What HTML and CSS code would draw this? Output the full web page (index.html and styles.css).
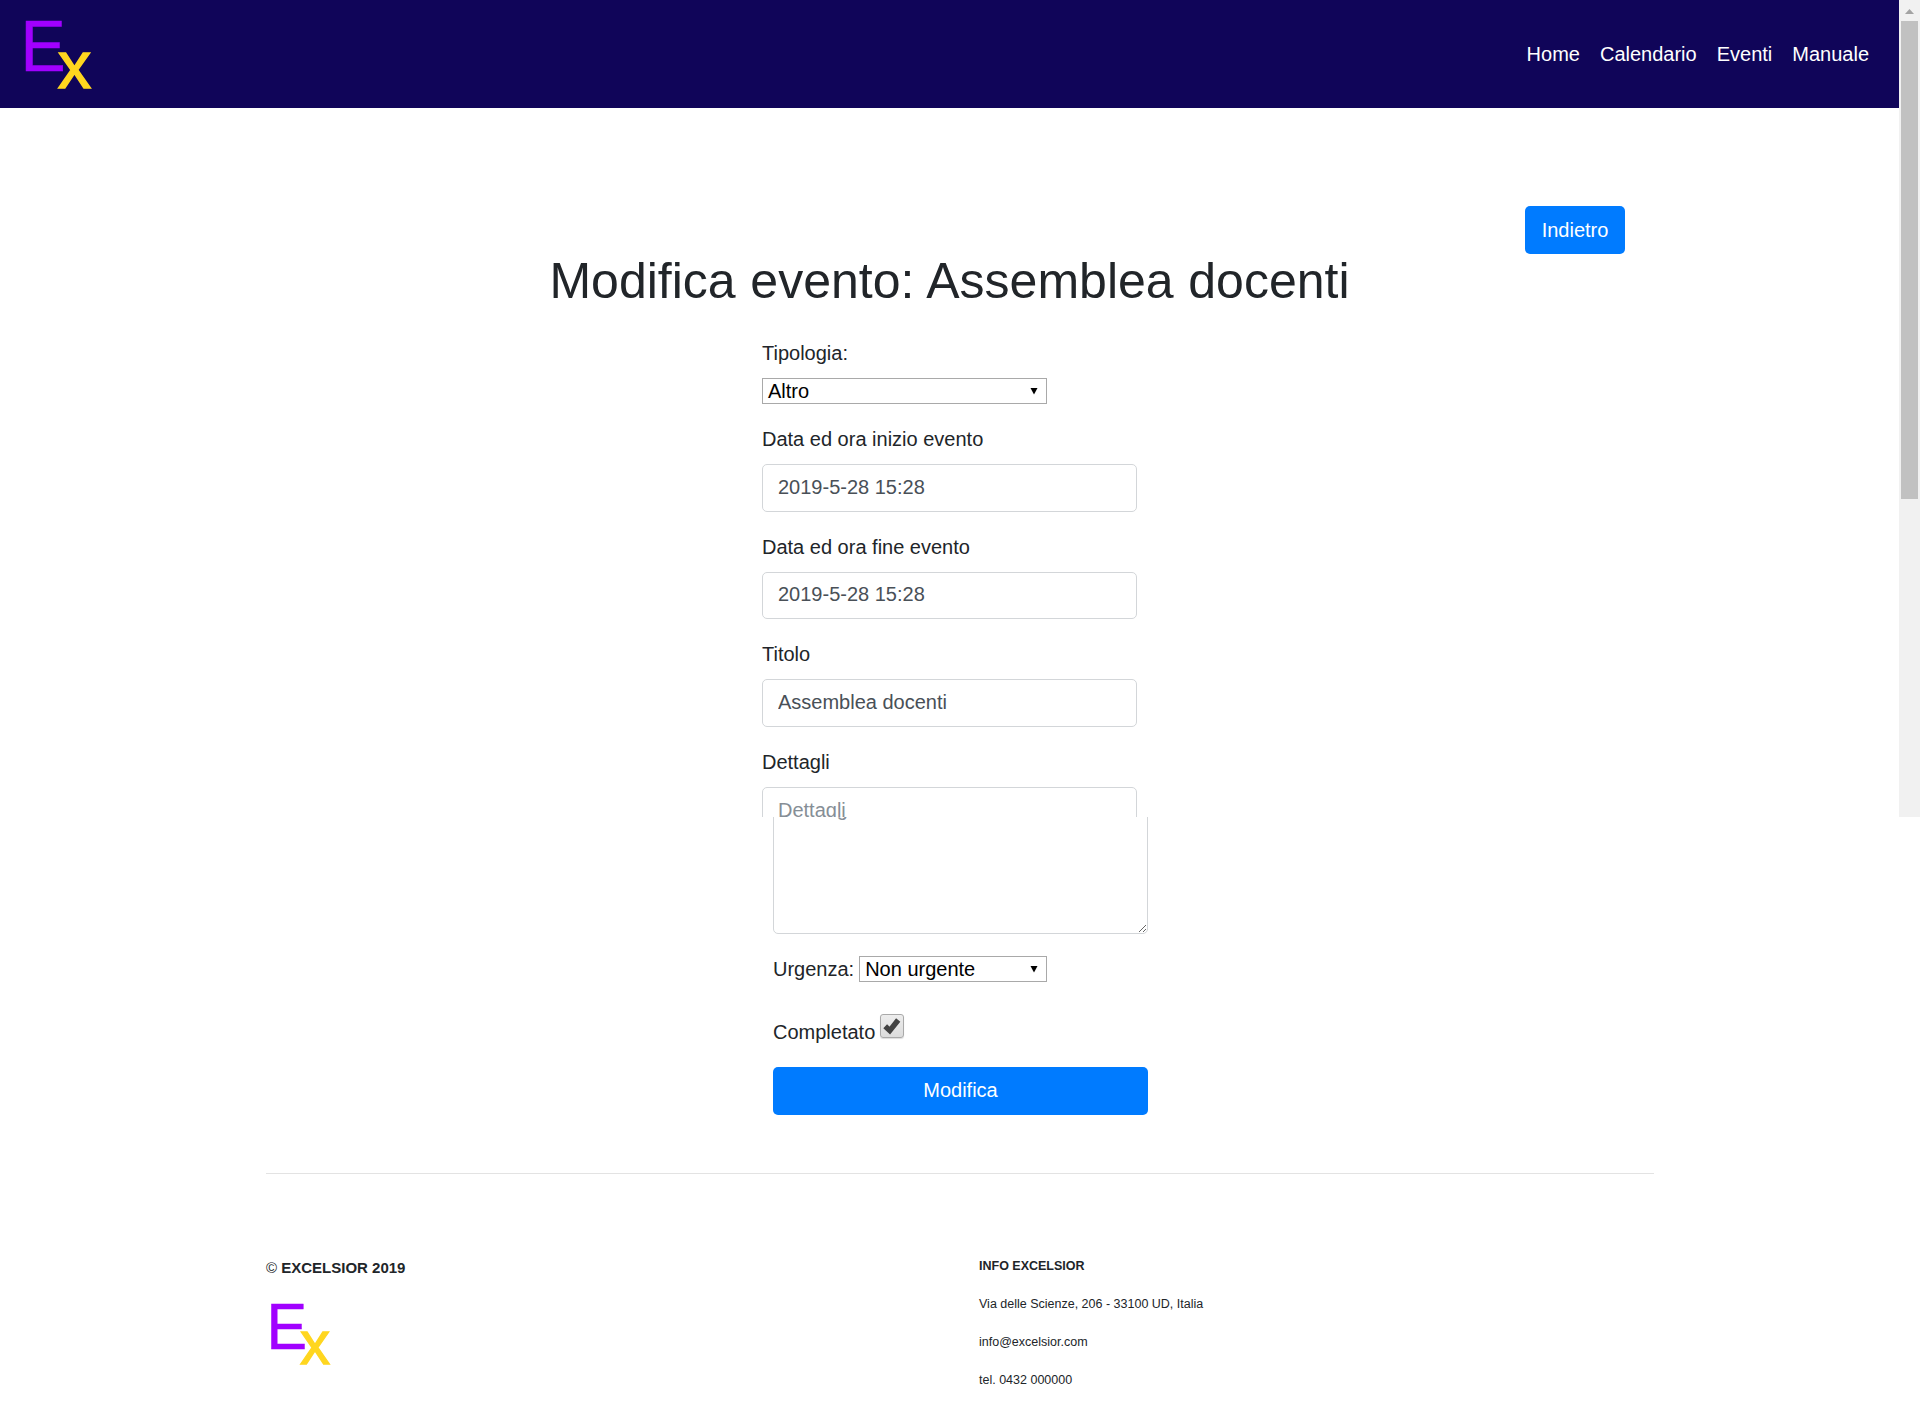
FILE: index.html
```html
<!DOCTYPE html>
<html lang="it">
<head>
<meta charset="utf-8">
<title>Modifica evento</title>
<link rel="stylesheet" href="styles.css">
</head>
<body>
<section class="viewport">
  <div class="page">
    <header class="navbar">
      <svg class="logo" width="90" height="108" viewBox="0 0 90 108" role="img" aria-label="Ex">
        <text class="logo-e" transform="translate(0.6 70.8) scale(0.94 1)">E</text>
        <text class="logo-x" x="37.8" y="87.8">x</text>
      </svg>
      <nav class="links"><a>Home</a><a>Calendario</a><a>Eventi</a><a>Manuale</a></nav>
    </header>
    <main class="main">
      <div class="back-row"><button class="btn">Indietro</button></div>
      <h1>Modifica evento: Assemblea docenti</h1>
      <form class="form">
        <label>Tipologia:</label>
        <div class="select select-type"><span>Altro</span><svg width="8" height="8" viewBox="0 0 8 8"><path d="M0.5 1h7L4 7.5z"/></svg></div>
        <label>Data ed ora inizio evento</label>
        <input class="control" type="text" value="2019-5-28 15:28">
        <label>Data ed ora fine evento</label>
        <input class="control" type="text" value="2019-5-28 15:28">
        <label>Titolo</label>
        <input class="control" type="text" value="Assemblea docenti">
        <label>Dettagli</label>
        <textarea class="control details-top" placeholder="Dettagli"></textarea>
      </form>
    </main>
  </div>
  <aside class="scrollbar">
    <svg width="21" height="21" viewBox="0 0 21 21"><path d="M6 14L10.5 9L15 14z"/></svg>
    <div class="thumb"></div>
  </aside>
</section>
<section class="lower">
  <form class="form form-lower">
    <textarea class="control details-bottom" placeholder="Dettagli"></textarea>
    <div class="urgency"><label>Urgenza:</label>
      <div class="select select-urgency"><span>Non urgente</span><svg width="8" height="8" viewBox="0 0 8 8"><path d="M0.5 1h7L4 7.5z"/></svg></div>
    </div>
    <div class="done"><label>Completato</label>
      <span class="check"><svg width="22" height="22" viewBox="0 0 22 22"><path d="M4.2 11.2L8.8 15.6L17.2 5"/></svg></span>
    </div>
    <button class="btn btn-block">Modifica</button>
  </form>
  <footer class="footer">
    <div class="brand">
      <p>© <b>EXCELSIOR 2019</b></p>
      <svg class="logo-small" width="81" height="97" viewBox="0 0 90 108" role="img" aria-label="Ex">
        <text class="logo-e" transform="translate(0.6 70.8) scale(0.94 1)">E</text>
        <text class="logo-x" x="37.8" y="87.8">x</text>
      </svg>
    </div>
    <div class="info">
      <p><b>INFO EXCELSIOR</b></p>
      <p>Via delle Scienze, 206 - 33100 UD, Italia</p>
      <p>info@excelsior.com</p>
      <p>tel. 0432 000000</p>
    </div>
  </footer>
</section>
</body>
</html>
```
FILE: styles.css
```css
* { box-sizing: border-box; }
body {
  margin: 0;
  height: 1408px;
  overflow: hidden;
  background: #fff;
  color: #212529;
  font: 20px/30px "Liberation Sans", Arial, sans-serif;
}
.viewport { display: flex; height: 817px; overflow: hidden; }
.page { flex: 1; }
.navbar {
  display: flex;
  justify-content: space-between;
  align-items: center;
  height: 108px;
  padding: 0 30px 0 20px;
  background: #100559;
}
.logo, .logo-small { display: block; }
.logo-e, .logo-x { font-family: "Liberation Sans", Arial, sans-serif; }
.logo-e { font-size: 72px; fill: #a100ff; stroke: #a100ff; stroke-width: 0.6px; }
.logo-x { font-size: 67px; fill: #ffd61f; stroke: #ffd61f; stroke-width: 1.4px; }
.links { display: flex; gap: 20px; color: #fff; }
.main { padding-top: 98px; }
.back-row { display: flex; justify-content: flex-end; height: 45.3px; padding-right: 274px; }
.btn {
  width: 100px;
  height: 48px;
  padding: 0;
  border: 0;
  border-radius: 5px;
  background: #007bff;
  color: #fff;
  font: inherit;
}
h1 {
  margin: 0;
  font-size: 50px;
  line-height: 60px;
  font-weight: 400;
  word-spacing: 0.8px;
  text-align: center;
}
.form { display: flex; flex-direction: column; width: 375px; margin: 27px 0 0 762px; }
.form > label { margin-bottom: 10px; }
.control {
  width: 375px;
  height: 47.5px;
  margin: 0 0 20px;
  padding: 7.5px 15px;
  border: 1.25px solid #d3d6d9;
  border-radius: 5px;
  background: #fff;
  color: #495057;
  font: inherit;
}
input.control { padding: 6.8px 15px 8.2px; }
.control::placeholder { color: #868e96; opacity: 1; }
.details-top { height: 160px; resize: none; }
.select {
  display: flex;
  align-items: center;
  justify-content: space-between;
  height: 26px;
  padding: 0 8px 0 5px;
  border: 1px solid #a9a9a9;
  color: #000;
}
.select-type { width: 285px; margin-bottom: 20px; }
.scrollbar { width: 21px; background: #f1f1f1; }
.scrollbar svg { display: block; fill: #a3a3a3; }
.thumb { width: 17px; height: 478px; margin-left: 2px; background: #c1c1c1; }
.lower { height: 591px; overflow: hidden; }
.form-lower { margin: -32px 0 0 773px; }
.details-bottom { height: 149px; margin-bottom: 20px; resize: both; }
.urgency { display: flex; align-items: center; gap: 5px; height: 30px; }
.select-urgency { width: 188px; margin-bottom: 1px; }
.done { display: flex; height: 38px; margin-top: 30px; gap: 5px; }
.done label { padding-top: 3px; }
.check {
  width: 24px;
  height: 24px;
  border: 1px solid #a9a9a9;
  border-radius: 3px;
  background: linear-gradient(#ededed, #dcdcdc);
  box-shadow: 0 1px 1px #ddd;
}
.check svg { display: block; fill: none; stroke: #424242; stroke-width: 5.4; }
.btn-block { width: 375px; margin-top: 15px; padding-bottom: 2px; }
.footer {
  display: flex;
  width: 1388px;
  margin: 58px 0 0 266px;
  border-top: 1px solid #e3e3e3;
}
.footer p { margin: 0; }
.brand { width: 713px; padding-top: 83px; font-size: 15px; line-height: 22px; }
.logo-small { margin: 6px 0 0; }
.info { padding-top: 83px; font-size: 12.5px; line-height: 19px; }
.footer .info p { margin-bottom: 19px; }
```
